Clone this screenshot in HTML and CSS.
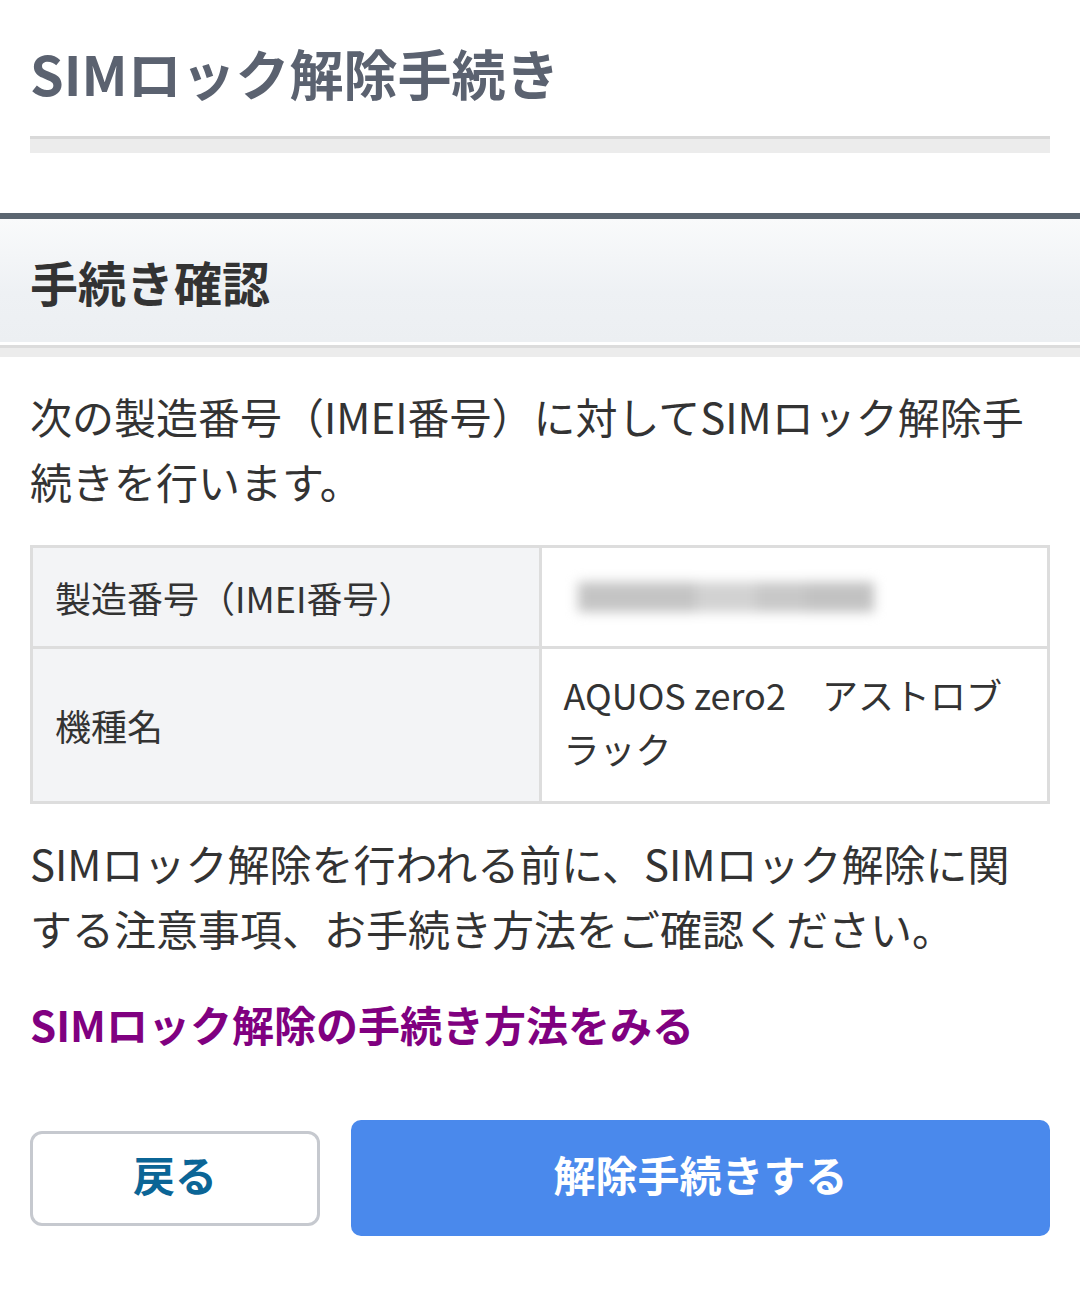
FILE: index.html
```html
<!DOCTYPE html>
<html lang="ja">
<head>
<meta charset="utf-8">
<title>SIMロック解除手続き</title>
<link rel="stylesheet" href="styles.css">
</head>
<body>
<div class="page">
  <header class="page-head">
    <h1 class="page-title">SIMロック解除手続き</h1>
    <div class="head-rule"></div>
  </header>

  <section class="section">
    <div class="section-head">
      <h2 class="section-title">手続き確認</h2>
    </div>
    <div class="section-rule"></div>

    <div class="content">
      <p class="text intro">次の製造番号（IMEI番号）に対してSIMロック解除手続きを行います。</p>

      <table class="info">
        <tr class="row-imei">
          <th>製造番号（IMEI番号）</th>
          <td><div class="masked"><span class="m1"></span><span class="m2"></span><span class="m3"></span><span class="m4"></span></div></td>
        </tr>
        <tr>
          <th>機種名</th>
          <td>AQUOS zero2　アストロブラック</td>
        </tr>
      </table>

      <p class="text note">SIMロック解除を行われる前に、SIMロック解除に関する注意事項、お手続き方法をご確認ください。</p>

      <p class="link-line"><a class="link" href="#">SIMロック解除の手続き方法をみる</a></p>

      <div class="actions">
        <button class="btn btn-back">戻る</button>
        <button class="btn btn-primary">解除手続きする</button>
      </div>
    </div>
  </section>
</div>
</body>
</html>
```

FILE: styles.css
```css
* { box-sizing: border-box; }

html, body {
  margin: 0;
  padding: 0;
  background: #fff;
}

body {
  font-family: "Noto Sans CJK JP", "Noto Sans", sans-serif;
  color: #333;
}

.page-head {
  padding: 32px 30px 0;
}

.page-title {
  margin: 0;
  font-size: 54px;
  line-height: 81px;
  font-weight: 700;
  color: #5b6270;
}

.head-rule {
  margin-top: 23px;
  height: 17px;
  border-top: 3px solid #d9d9d9;
  background: #ececec;
}

.section {
  margin-top: 60px;
}

.section-head {
  border-top: 6px solid #5b6570;
  background: linear-gradient(to bottom, #f9fafb 0%, #eef1f4 60%, #eceff2 100%);
  height: 132px;
  padding: 0 30px;
  display: flex;
  align-items: center;
  border-bottom: 3px solid #fff;
}

.section-title {
  margin: 0;
  font-size: 48px;
  font-weight: 700;
  line-height: 1;
  color: #333;
}

.section-rule {
  height: 12px;
  border-top: 3px solid #dcdcdc;
  background: #ececec;
}

.content {
  padding: 26px 30px 40px;
}

.text {
  margin: 0;
  font-size: 42px;
  line-height: 65px;
  color: #333;
}

.intro {
  margin-bottom: 32px;
}

.info {
  width: 100%;
  border-collapse: collapse;
  border: 3px solid #dddddd;
  table-layout: fixed;
}

.info th,
.info td {
  border: 3px solid #dddddd;
  padding: 22px 22px;
  font-size: 36px;
  line-height: 54px;
  font-weight: 400;
  text-align: left;
  vertical-align: middle;
  color: #333;
}

.info tr:last-child td {
  padding-top: 18px;
  padding-bottom: 26px;
}

.info th {
  background: #f3f4f6;
}

.info td {
  background: #fff;
}

.masked {
  position: relative;
  width: 330px;
  height: 54px;
  filter: blur(6px);
}

.masked span {
  position: absolute;
  top: 12px;
  height: 30px;
  background: #c4c4c4;
}

.masked .m1 { left: 14px; width: 118px; }
.masked .m2 { left: 132px; width: 60px; background: #d2d2d2; }
.masked .m3 { left: 192px; width: 50px; background: #c8c8c8; }
.masked .m4 { left: 242px; width: 68px; background: #c2c2c2; }

.note {
  margin-top: 26px;
}

.link-line {
  margin: 32px 0 0;
  font-size: 42px;
  line-height: 64px;
}

.link {
  color: #800080;
  font-weight: 700;
  text-decoration: none;
}

.actions {
  margin-top: 64px;
  display: flex;
  align-items: center;
  gap: 31px;
}

.btn {
  font-family: "Noto Sans CJK JP", "Noto Sans", sans-serif;
  font-weight: 700;
  font-size: 42px;
  line-height: 1;
  padding: 0 0 8px;
  border-radius: 12px;
  cursor: pointer;
  margin: 0;
}

.btn-back {
  width: 290px;
  height: 95px;
  background: #fff;
  border: 3px solid #c6c9cf;
  color: #0b6596;
  flex: none;
}

.btn-primary {
  flex: 1;
  height: 116px;
  background: #4a89ec;
  border: none;
  color: #fff;
  border-radius: 10px;
}
```
